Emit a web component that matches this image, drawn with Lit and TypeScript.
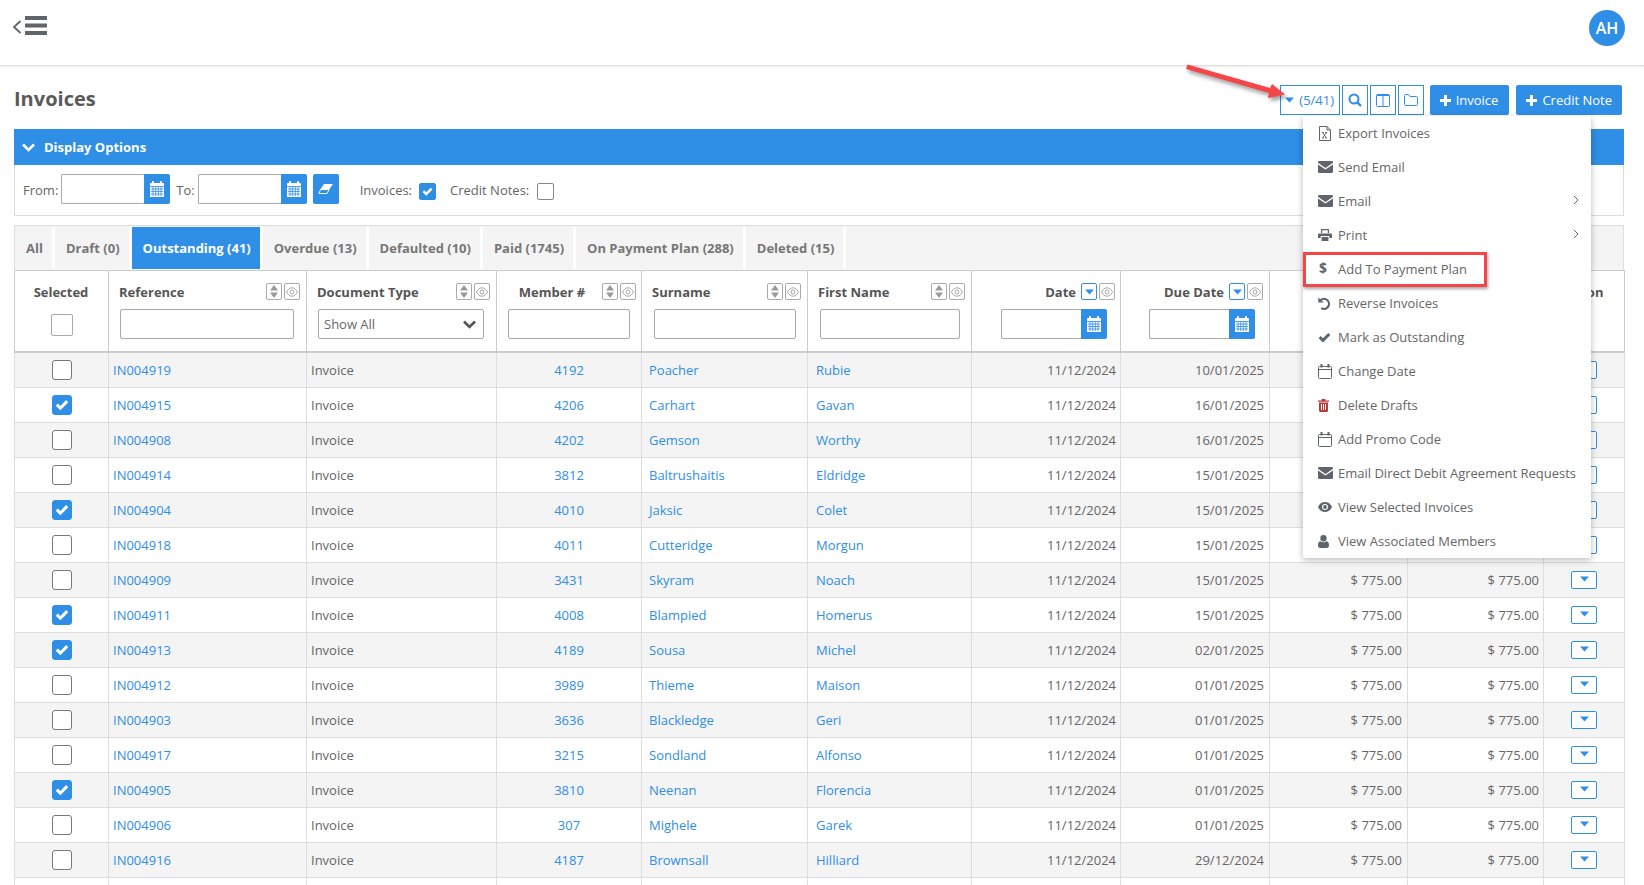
import { LitElement, html, css } from "lit";
import { customElement } from "lit/decorators.js";

const ICON = "#5f656b";

const cal = () => html`<svg width="14" height="16" viewBox="0 0 14 16"><path fill="#fff" d="M0 3.2c0-.7.5-1.2 1.2-1.2H2V1c0-.6.4-1 1-1s1 .4 1 1v1h6V1c0-.6.4-1 1-1s1 .4 1 1v1h.8c.7 0 1.2.5 1.2 1.2V16H0z"/><path stroke="#2f8ee5" stroke-width=".8" fill="none" d="M0 5.5h14M1 8h12M1 10.5h12M1 13h12M3 5.5V15M5.7 5.5V15M8.3 5.5V15M11 5.5V15"/></svg>`;
const caret = () => html`<svg width="9" height="6" viewBox="0 0 9 6"><path fill="#2f8ee5" d="M0 .5h9L4.5 5.5z"/></svg>`;
const sortIc = () => html`<span class="mini"><svg width="8" height="13" viewBox="0 0 8 13"><path fill="#9a9a9a" d="M4 0l4 5.5H0zM0 7.5h8L4 13z"/></svg></span>`;
const eyeIc = () => html`<span class="mini"><svg width="12" height="12" viewBox="0 0 12 12" fill="none" stroke="#a5a5a5"><path d="M.5 6C2 3.2 3.8 1.8 6 1.8S10 3.2 11.5 6C10 8.8 8.2 10.2 6 10.2S2 8.8.5 6z"/><circle cx="6" cy="6" r="2"/></svg></span>`;
const dateSort = () => html`<span class="mini act">${caret()}</span>`;
const check = (c = "#fff", s = 12) => html`<svg width=${s} height=${s} viewBox="0 0 12 12"><path fill=${c} d="M4.6 10.6L.6 6.6l1.9-1.9 2.1 2.1 4.9-5 1.9 1.9z"/></svg>`;

const env = html`<svg width="15" height="12" viewBox="0 0 15 12"><path fill=${ICON} d="M0 1.2C0 .5.5 0 1.2 0h12.6c.7 0 1.2.5 1.2 1.2v.5L7.5 7 0 1.7zM0 3.4l7.5 5.2L15 3.4v7.4c0 .7-.5 1.2-1.2 1.2H1.2C.5 12 0 11.5 0 10.8z"/></svg>`;
const calOut = html`<svg width="14" height="15" viewBox="0 0 14 15" fill="none" stroke=${ICON}><rect x=".5" y="2.5" width="13" height="12" rx="1"/><path d="M.5 5.5h13"/><path stroke-width="2" d="M3.5 0v3.5M10.5 0v3.5"/></svg>`;
const menu = [
  { t: "Export Invoices", i: html`<svg width="14" height="15" viewBox="0 0 14 15" fill="none" stroke=${ICON}><path d="M1.5.5h7.5l3.5 3.5v10.5h-11z"/><path d="M9 .5V4h3.5"/><path d="M4.6 6.5l3.8 5.5M8.4 6.5L4.6 12M4 12h2M7 12h2M4 6.5h2M7 6.5h2" stroke-width=".9"/></svg>` },
  { t: "Send Email", i: env },
  { t: "Email", i: env, sub: true },
  { t: "Print", i: html`<svg width="14" height="12" viewBox="0 0 14 12"><path fill=${ICON} d="M3 0h8v4H9.8V1.2H4.2V4H3zM1 4.5h12c.6 0 1 .4 1 1V9h-2.6V7H2.6v2H0V5.5c0-.6.4-1 1-1zM3.6 8h6.8v4H3.6z"/></svg>`, sub: true },
  { t: "Add To Payment Plan", i: html`<span class="dollar">$</span>` },
  { t: "Reverse Invoices", i: html`<svg width="13" height="13" viewBox="0 0 12 12" fill="none" stroke=${ICON} stroke-width="2"><path d="M2.4 3A4.600 4.600 0 1 1 3 10.200"/><path fill=${ICON} stroke="none" d="M.3 .4l5 4.600H.3z"/></svg>` },
  { t: "Mark as Outstanding", i: check(ICON, 13) },
  { t: "Change Date", i: calOut },
  { t: "Delete Drafts", i: html`<svg width="11" height="13" viewBox="0 0 11 13"><path fill="#b23a3a" fill-rule="evenodd" d="M3.5 1.5V.6c0-.3.3-.6.6-.6h2.800c.3 0 .6.3.6.6v.9H11v1.200H0V1.500zM1 3.400h9v8.400c0 .7-.5 1.200-1.200 1.200H2.200C1.500 13 1 12.500 1 11.800zM3 5v6h1V5zM5 5v6h1V5zM7 5v6h1V5z"/></svg>` },
  { t: "Add Promo Code", i: calOut },
  { t: "Email Direct Debit Agreement Requests", i: env },
  { t: "View Selected Invoices", i: html`<svg width="14" height="10" viewBox="0 0 14 10"><path fill=${ICON} d="M0 5C1.600 1.800 4 0 7 0s5.400 1.800 7 5c-1.600 3.200-4 5-7 5S1.600 8.200 0 5z"/><circle cx="7" cy="5" r="3" fill="#fff"/><circle cx="7" cy="5" r="1.900" fill=${ICON}/></svg>` },
  { t: "View Associated Members", i: html`<svg width="11" height="13" viewBox="0 0 11 13"><path fill=${ICON} d="M5.500 0a3.200 3.200 0 1 1 0 6.400 3.200 3.200 0 0 1 0-6.400zM2.300 6.200c.8.700 1.900 1.100 3.200 1.100s2.400-.4 3.200-1.100c1.500.3 2.300 1.800 2.300 4.300 0 1.500-.9 2.500-2.200 2.500H2.200C.9 13 0 12 0 10.500c0-2.500.8-4 2.300-4.300z"/></svg>` },
];

const rows: [string, string, string, string, string, boolean][] = [
  ["IN004919", "4192", "Poacher", "Rubie", "10/01/2025", false],
  ["IN004915", "4206", "Carhart", "Gavan", "16/01/2025", true],
  ["IN004908", "4202", "Gemson", "Worthy", "16/01/2025", false],
  ["IN004914", "3812", "Baltrushaitis", "Eldridge", "15/01/2025", false],
  ["IN004904", "4010", "Jaksic", "Colet", "15/01/2025", true],
  ["IN004918", "4011", "Cutteridge", "Morgun", "15/01/2025", false],
  ["IN004909", "3431", "Skyram", "Noach", "15/01/2025", false],
  ["IN004911", "4008", "Blampied", "Homerus", "15/01/2025", true],
  ["IN004913", "4189", "Sousa", "Michel", "02/01/2025", true],
  ["IN004912", "3989", "Thieme", "Maison", "01/01/2025", false],
  ["IN004903", "3636", "Blackledge", "Geri", "01/01/2025", false],
  ["IN004917", "3215", "Sondland", "Alfonso", "01/01/2025", false],
  ["IN004905", "3810", "Neenan", "Florencia", "01/01/2025", true],
  ["IN004906", "307", "Mighele", "Garek", "01/01/2025", false],
  ["IN004916", "4187", "Brownsall", "Hilliard", "29/12/2024", false],
];

const tabs = ["All", "Draft (0)", "Outstanding (41)", "Overdue (13)", "Defaulted (10)", "Paid (1745)", "On Payment Plan (288)", "Deleted (15)"];

@customElement("app-root")
export class AppRoot extends LitElement {
  static styles = css`
    :host { display: block; position: relative; width: 1644px; height: 885px; overflow: hidden; background: #fff;
      font: 13px/18px "Open Sans", sans-serif; color: #666; }
    * { box-sizing: border-box; }
    .top { height: 66px; display: flex; justify-content: space-between; align-items: flex-start; padding: 13px 19px 0 12px;
      border-bottom: 1px solid #ddd; box-shadow: 0 1px 2px rgba(0,0,0,.08); }
    .avatar { width: 36px; height: 36px; margin-top: -3px; border-radius: 50%; background: #2f8ee5; color: #fff; font-size: 16px; font-weight: 600;
      display: flex; align-items: center; justify-content: center; }
    main { padding: 0 20px 0 14px; }
    .titlebar { height: 63px; display: flex; align-items: center; justify-content: space-between; padding: 5px 2px 0 0; }
    h1 { margin: -3px 0 0; font-size: 20px; line-height: 28px; font-weight: 700; color: #5a5a5a; }
    .tools { display: flex; align-items: center; }
    .tool { height: 30px; width: 26px; margin-left: 2px; border: 1px solid #2f8ee5; background: #fff; color: #2f8ee5; display: flex; align-items: center; justify-content: center; }
    .count { width: 60px; margin: 0; gap: 5px; }
    .add { height: 30px; margin-left: 7px; padding: 0 10px; background: #2f8ee5; color: #fff; border-radius: 2px; display: flex; align-items: center; gap: 5px; }
    .add.inv { padding-right: 11px; margin-left: 6px; }
    .bar { height: 36px; background: #2f8ee5; color: #fff; font-weight: 700; display: flex; align-items: center; gap: 9px; padding-left: 8px; }
    .panel { height: 51px; border: 1px solid #ddd; border-top: 0; display: flex; align-items: center; padding: 0 0 2px 8px; }
    .panel span { margin-top: 2px; }
    .ml6 { margin-left: 6px; } .ml21 { margin-left: 21px; } .ml14 { margin-left: 14px; }
    .lbl { margin-right: 3px; }
    .dgroup { display: flex; height: 30px; }
    .dinput { flex: 1; border: 1px solid #aaa; border-right: 0; border-radius: 2px 0 0 2px; background: #fff; }
    .calbtn { width: 26px; background: #2f8ee5; border-radius: 0 2px 2px 0; display: flex; align-items: center; justify-content: center; flex: none; }
    .g109 { width: 109px; }
    .erase { width: 26px; height: 30px; border-radius: 2px; background: #2f8ee5; display: flex; align-items: center; justify-content: center; }
    .cb17 { width: 17px; height: 17px; margin: 4px 0 0 7px; border: 1px solid #888; border-radius: 2px; background: #fff; display: flex; align-items: center; justify-content: center; }
    .cb17.on { background: #2f8ee5; border-color: #2f8ee5; }
    .cb17.far { margin-left: 8px; }
    .tabs { margin-top: 9px; height: 45px; background: #f4f4f4; border: 1px solid #ddd; border-bottom: 0; padding-top: 1px; display: flex; }
    .tab { height: 42px; padding: 0 9px 0 11px; line-height: 42px; font-weight: 700; color: #777; box-sizing: content-box; border-right: 3px solid #fff; }
    .tab.on { background: #2f8ee5; color: #fff; }
    table { border-collapse: collapse; table-layout: fixed; width: 1610px; }
    th, td { border: 1px solid #ddd; padding: 0 4px; }
    th { border-color: #ccc; padding: 12px 6px 12px 10px; height: 81px; font-weight: 700; color: #555; vertical-align: top; text-align: left; background: #fff; }
    thead th { border-bottom: 2px solid #ccc; }
    td { height: 35px; white-space: nowrap; }
    tbody tr:nth-child(odd) td { background: #f4f4f4; }
    td.pl7 { padding-left: 7px; }
    td.pl8 { padding-left: 8px; }
    td.pr5 { padding-right: 5px; }
    .hd { display: flex; align-items: center; height: 17px; margin-bottom: 9px; gap: 2px; white-space: nowrap; }
    .hd .name { flex: 1; }
    .hd.c .name { text-align: center; }
    .hd.r .name { text-align: right; padding-right: 3px; }
    th.ctr { padding-left: 5px; }
    th.mem { padding-right: 5px; }
    th.mem .name { padding-left: 2px; }
    th.dt { padding-right: 5px; }
    th.actc { padding-left: 5px; padding-right: 8px; text-align: center; }
    .mini { width: 16px; height: 17px; border: 1px solid #aaa; border-radius: 2px; display: flex; align-items: center; justify-content: center; flex: none; background: #fff; }
    .mini.act { border-color: #2f8ee5; }
    .f { display: block; height: 30px; margin: 0 6px 0 1px; border: 1px solid #aaa; border-radius: 2px; background: #fff; }
    .f.mem { margin: 0 6px 0 6px; }
    .f.sn { margin: 0 5px 0 2px; }
    .f.fn { margin: 0 5px 0 2px; }
    .sel { display: flex; align-items: center; justify-content: space-between; padding: 0 7px 0 5px; font-weight: 400; color: #666; }
    .datef { margin: 0 8px 0 auto; width: 106px; }
    .headcb { width: 22px; height: 22px; margin: 14px auto 0; border: 1px solid #aaa; border-radius: 2px; position: relative; left: 1px; }
    .cb { width: 20px; height: 20px; margin: 0 auto; border: 1px solid #777; border-radius: 3px; background: #fff; display: flex; align-items: center; justify-content: center; }
    .cb.on { background: #2f8ee5; border-color: #2f8ee5; }
    a { color: #2f8ee5; text-decoration: none; }
    .tc { text-align: center; } .tr { text-align: right; }
    .actbtn { width: 26px; height: 18px; margin: 0 auto; border: 1px solid #2f8ee5; border-radius: 2px; background: #fff; display: flex; align-items: center; justify-content: center; padding-bottom: 2px; }
    .c1 { width: 94px; } .c2 { width: 198px; } .c3 { width: 190px; } .c4 { width: 145px; } .c5 { width: 166px; } .c6 { width: 164px; }
    .c7 { width: 149px; } .c8 { width: 149px; } .c9 { width: 138px; } .c10 { width: 136px; } .c11 { width: 81px; }
    .menu { position: absolute; left: 1303px; top: 116px; width: 288px; height: 442px; background: #fff; box-shadow: 0 2px 7px rgba(0,0,0,.28); border-radius: 2px; }
    .item { height: 34px; display: flex; align-items: center; padding: 0 0 0 15px; color: #666; position: relative; }
    .ic { width: 20px; display: flex; align-items: center; flex: none; }
    .dollar { font-weight: 700; font-size: 14px; color: #5f656b; padding-left: 1px; position: relative; top: -1px; }
    .chev { position: absolute; right: 12px; top: 11px; }
    .hl { position: absolute; left: 1303px; top: 252px; width: 184px; height: 35px; border: 3px solid #f44649; box-shadow: 1px 2px 3px rgba(0,0,0,.35); }
    .arrow { position: absolute; left: 1180px; top: 55px; filter: drop-shadow(2px 3px 2px rgba(0,0,0,.4)); }
  `;

  private head(name: string, mod: string) {
    return html`<div class="hd ${mod}"><span class="name">${name}</span>${mod === "r" ? dateSort() : sortIc()}${eyeIc()}</div>`;
  }

  render() {
    return html`
      <header class="top">
        <svg width="36" height="22" viewBox="0 0 36 22"><path fill="none" stroke="${ICON}" stroke-width="1.800" d="M8.500 8L2 14l6.500 6"/><path fill="${ICON}" d="M13 3h22v4H13zM13 10.500h22v4H13zM13 18h22v4H13z"/></svg>
        <div class="avatar">AH</div>
      </header>
      <main>
        <div class="titlebar">
          <h1>Invoices</h1>
          <div class="tools">
            <div class="tool count">${caret()}<span>(5/41)</span></div>
            <div class="tool"><svg width="14" height="14" viewBox="0 0 14 14" fill="none" stroke="#2f8ee5" stroke-width="2"><circle cx="6" cy="6" r="4.500"/><path stroke-width="2.400" d="M9.300 9.300L13 13"/></svg></div>
            <div class="tool"><svg width="14" height="13" viewBox="0 0 14 13" fill="none" stroke="#2f8ee5"><rect x=".5" y=".5" width="13" height="12" rx="1"/><path d="M7 .5v12"/><path d="M1 1.500h12"/></svg></div>
            <div class="tool"><svg width="14" height="12" viewBox="0 0 14 12" fill="none" stroke="#2f8ee5"><path d="M.5 1.500c0-.6.4-1 1-1h3l1.500 2h6.500c.6 0 1 .4 1 1v7c0 .6-.4 1-1 1h-11c-.6 0-1-.4-1-1z"/></svg></div>
            <div class="add inv"><svg width="11" height="11" viewBox="0 0 11 11"><path fill="#fff" d="M4 0h3v4h4v3H7v4H4V7H0V4h4z"/></svg>Invoice</div>
            <div class="add"><svg width="11" height="11" viewBox="0 0 11 11"><path fill="#fff" d="M4 0h3v4h4v3H7v4H4V7H0V4h4z"/></svg>Credit Note</div>
          </div>
        </div>
        <div class="bar"><svg width="13" height="9" viewBox="0 0 13 9"><path fill="none" stroke="#fff" stroke-width="2.600" d="M1 1.500l5.500 5.500L12 1.500"/></svg>Display Options</div>
        <div class="panel">
          <span class="lbl">From:</span>
          <div class="dgroup g109"><div class="dinput"></div><div class="calbtn">${cal()}</div></div>
          <span class="lbl ml6">To:</span>
          <div class="dgroup g109"><div class="dinput"></div><div class="calbtn">${cal()}</div></div>
          <div class="erase ml6"><svg width="15" height="10" viewBox="0 0 15 10"><path fill="#fff" d="M6 0h9l-3.400 5H2.600z"/><path fill="none" stroke="#fff" d="M2.600 5.500h8.500L9 9.500H.9z"/></svg></div>
          <span class="ml21">Invoices:</span>
          <div class="cb17 on">${check("#fff", 11)}</div>
          <span class="ml14">Credit Notes:</span>
          <div class="cb17 far"></div>
        </div>
        <div class="tabs">
          ${tabs.map((t, i) => html`<div class="tab ${i === 2 ? "on" : ""}">${t}</div>`)}
        </div>
        <table>
          <colgroup>${[1, 2, 3, 4, 5, 6, 7, 8, 9, 10, 11].map((n) => html`<col class="c${n}" />`)}</colgroup>
          <thead>
            <tr>
              <th class="ctr"><div class="hd c"><span class="name">Selected</span></div><div class="headcb"></div></th>
              <th>${this.head("Reference", "")}<div class="f"></div></th>
              <th>${this.head("Document Type", "")}<div class="f sel">Show All<svg width="13" height="9" viewBox="0 0 13 9"><path fill="none" stroke="#555" stroke-width="2.600" d="M1 1.500l5.500 5.500L12 1.500"/></svg></div></th>
              <th class="ctr mem">${this.head("Member #", "c")}<div class="f mem"></div></th>
              <th>${this.head("Surname", "")}<div class="f sn"></div></th>
              <th>${this.head("First Name", "")}<div class="f fn"></div></th>
              <th class="dt">${this.head("Date", "r")}<div class="dgroup datef"><div class="dinput"></div><div class="calbtn">${cal()}</div></div></th>
              <th>${this.head("Due Date", "r")}<div class="dgroup datef"><div class="dinput"></div><div class="calbtn">${cal()}</div></div></th>
              <th></th>
              <th></th>
              <th class="actc">Action</th>
            </tr>
          </thead>
          <tbody>
            ${rows.map((r, i) => html`<tr>
              <td><div class="cb ${r[5] ? "on" : ""}">${r[5] ? check("#fff", 14) : ""}</div></td>
              <td><a>${r[0]}</a></td>
              <td>Invoice</td>
              <td class="tc"><a>${r[1]}</a></td>
              <td class="pl7"><a>${r[2]}</a></td>
              <td class="pl8"><a>${r[3]}</a></td>
              <td class="tr">11/12/2024</td>
              <td class="tr pr5">${r[4]}</td>
              <td class="tr pr5">${i > 5 ? "$ 775.00" : ""}</td>
              <td class="tr">${i > 5 ? "$ 775.00" : ""}</td>
              <td><div class="actbtn">${caret()}</div></td>
            </tr>`)}
            <tr>${[1, 2, 3, 4, 5, 6, 7, 8, 9, 10, 11].map(() => html`<td></td>`)}</tr>
          </tbody>
        </table>
      </main>
      <div class="menu">
        ${menu.map((m) => html`<div class="item"><span class="ic">${m.i}</span>${m.t}${m.sub ? html`<svg class="chev" width="6" height="10" viewBox="0 0 6 10"><path fill="none" stroke="#666" d="M1 1l4 4-4 4"/></svg>` : ""}</div>`)}
      </div>
      <div class="hl"></div>
      <svg class="arrow" width="112" height="52" viewBox="0 0 112 52"><path fill="#f44649" d="M7.500 9.500L90 33l2-4 13 10.500-17 3.500 1-5L6 14z"/></svg>
    `;
  }
}
